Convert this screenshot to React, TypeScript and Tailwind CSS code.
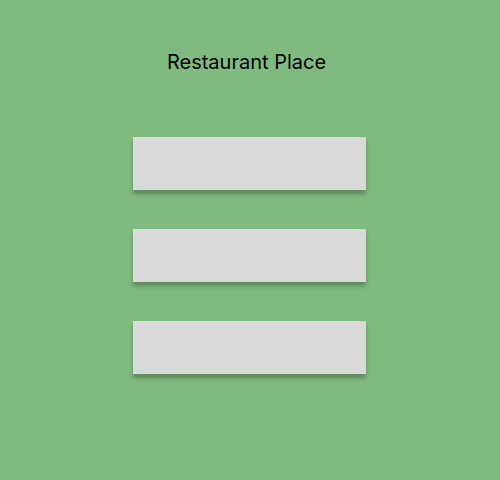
export default function App() {
    const boxes = [1, 2, 3];

    return (
        <main className="w-[500px] h-[480px] bg-[#7fba7f] flex flex-col items-center font-['Inter',sans-serif]">
            <h1 className="mt-[50px] mr-[7px] text-[20px] leading-[24px] font-normal text-black">
                Restaurant Place
            </h1>
            <div className="mt-[63px] mr-px flex flex-col gap-[39px]">
                {boxes.map((b) => (
                    <div
                        key={b}
                        className="w-[233px] h-[53px] bg-[#d9d9d9] shadow-[0_4px_4px_rgba(0,0,0,0.25)]"
                    />
                ))}
            </div>
        </main>
    );
}
